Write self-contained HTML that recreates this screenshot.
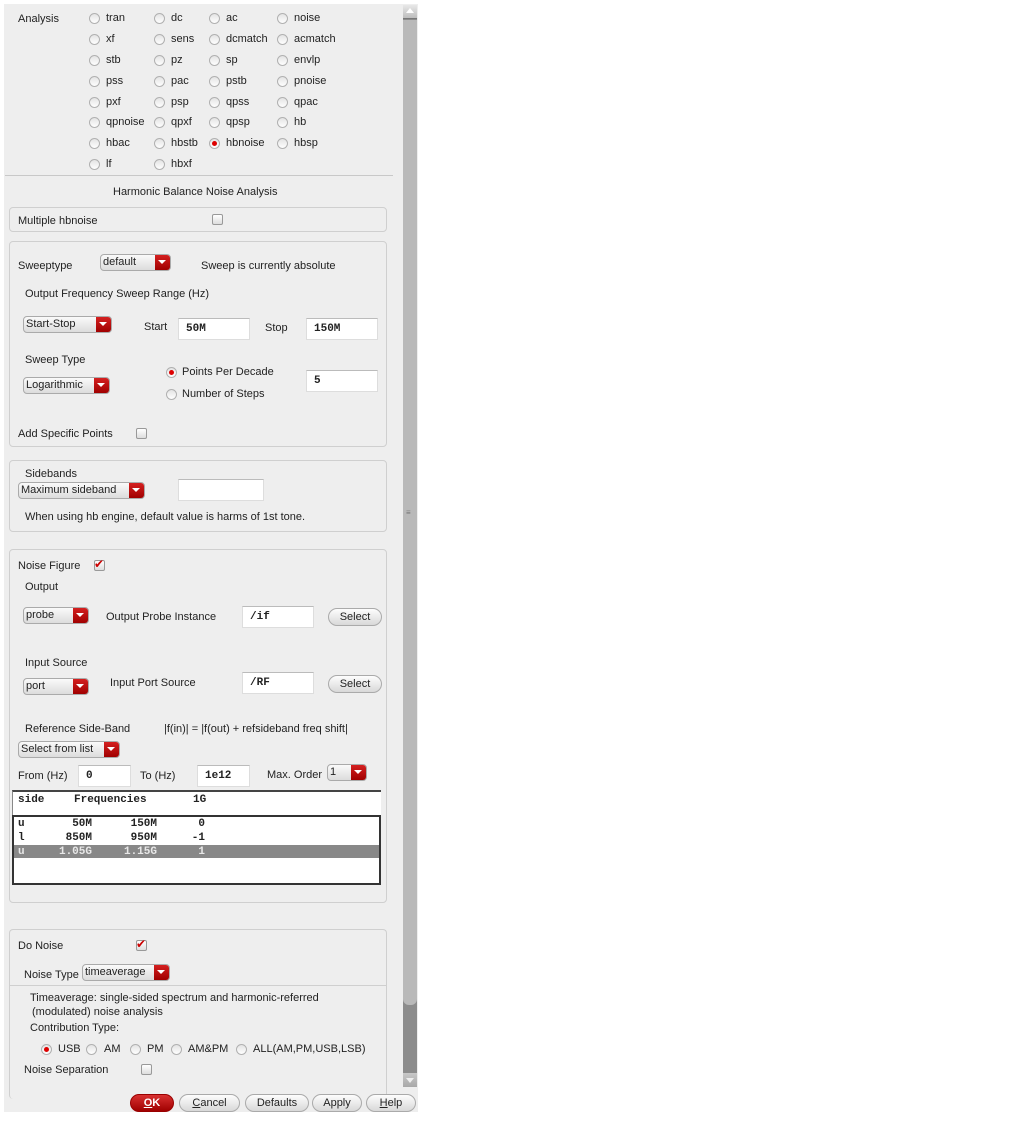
<!DOCTYPE html>
<html><head><meta charset="utf-8"><style>
*{box-sizing:border-box;margin:0;padding:0}
body{width:1013px;height:1122px;background:#fff;position:relative;overflow:hidden;font-family:"Liberation Sans","DejaVu Sans",sans-serif;font-size:11px;color:#222}
.bg{position:absolute;left:4px;top:4px;width:414px;height:1108px;background:#eeeeee}
.t{position:absolute;white-space:nowrap;line-height:12px}
.m{font-family:"Liberation Mono",monospace;font-weight:bold;font-size:11px}
.r{position:absolute;width:11px;height:11px;border-radius:50%;border:1px solid #b0b0b0;background:linear-gradient(#e4e4e4,#fff)}
.r.on::after{content:"";position:absolute;left:2px;top:2px;width:5px;height:5px;border-radius:50%;background:#d00}
.cb{position:absolute;width:11px;height:11px;border:1px solid #999;border-radius:2px;background:linear-gradient(#fff,#ddd)}
.ck{position:absolute;color:#c00;font-size:12px;font-weight:bold;line-height:11px}
.p{position:absolute;border:1px solid #cfcfcf;border-radius:4px;left:9px;width:378px}
.dd{position:absolute;height:17px;border:1px solid #aaa;border-radius:4px;background:linear-gradient(#fafafa,#dcdcdc);font-size:11px;line-height:14px;padding-left:2px;overflow:hidden}
.dd::after{content:"";position:absolute;right:0;top:0;width:15px;height:15px;background:linear-gradient(#d42020,#a00000)}
.dd::before{content:"";position:absolute;right:4px;top:5px;border-left:4px solid transparent;border-right:4px solid transparent;border-top:4px solid #fff;z-index:2}
.in{position:absolute;height:22px;background:#fff;border:1px solid #ddd;border-top-color:#bbb;font-family:"Liberation Mono",monospace;font-weight:bold;line-height:20px;padding-left:7px}
.b{position:absolute;height:18px;border:1px solid #aaa;border-radius:9px;background:linear-gradient(#fdfdfd,#d8d8d8);text-align:center;line-height:16px}
</style></head><body>
<div class="bg"></div>
<div style="position:absolute;left:403px;top:5px;width:14px;height:1082px;background:#8c8c8c"></div>
<div style="position:absolute;left:403px;top:5px;width:14px;height:14px;background:linear-gradient(#e8e8e8,#bdbdbd);border-bottom:1px solid #777"></div>
<div style="position:absolute;left:406px;top:8px;border-left:4px solid transparent;border-right:4px solid transparent;border-bottom:5px solid #fff"></div>
<div style="position:absolute;left:403px;top:20px;width:14px;height:985px;background:#b9b9b9;border-radius:0 0 6px 6px"></div>
<div style="position:absolute;left:403px;top:1073px;width:14px;height:14px;background:linear-gradient(#c8c8c8,#a8a8a8)"></div>
<div style="position:absolute;left:406px;top:1078px;border-left:4px solid transparent;border-right:4px solid transparent;border-top:5px solid #eee"></div>
<div class="t" style="left:406px;top:507px;color:#777;font-size:8px">≡</div>

<div class="t" style="left:18px;top:13px">Analysis</div>
<div class="r" style="left:89px;top:13px"></div><div class="t" style="left:106px;top:12px">tran</div>
<div class="r" style="left:154px;top:13px"></div><div class="t" style="left:171px;top:12px">dc</div>
<div class="r" style="left:209px;top:13px"></div><div class="t" style="left:226px;top:12px">ac</div>
<div class="r" style="left:277px;top:13px"></div><div class="t" style="left:294px;top:12px">noise</div>

<div class="r" style="left:89px;top:34px"></div><div class="t" style="left:106px;top:33px">xf</div>
<div class="r" style="left:154px;top:34px"></div><div class="t" style="left:171px;top:33px">sens</div>
<div class="r" style="left:209px;top:34px"></div><div class="t" style="left:226px;top:33px">dcmatch</div>
<div class="r" style="left:277px;top:34px"></div><div class="t" style="left:294px;top:33px">acmatch</div>

<div class="r" style="left:89px;top:55px"></div><div class="t" style="left:106px;top:54px">stb</div>
<div class="r" style="left:154px;top:55px"></div><div class="t" style="left:171px;top:54px">pz</div>
<div class="r" style="left:209px;top:55px"></div><div class="t" style="left:226px;top:54px">sp</div>
<div class="r" style="left:277px;top:55px"></div><div class="t" style="left:294px;top:54px">envlp</div>

<div class="r" style="left:89px;top:76px"></div><div class="t" style="left:106px;top:75px">pss</div>
<div class="r" style="left:154px;top:76px"></div><div class="t" style="left:171px;top:75px">pac</div>
<div class="r" style="left:209px;top:76px"></div><div class="t" style="left:226px;top:75px">pstb</div>
<div class="r" style="left:277px;top:76px"></div><div class="t" style="left:294px;top:75px">pnoise</div>

<div class="r" style="left:89px;top:97px"></div><div class="t" style="left:106px;top:96px">pxf</div>
<div class="r" style="left:154px;top:97px"></div><div class="t" style="left:171px;top:96px">psp</div>
<div class="r" style="left:209px;top:97px"></div><div class="t" style="left:226px;top:96px">qpss</div>
<div class="r" style="left:277px;top:97px"></div><div class="t" style="left:294px;top:96px">qpac</div>

<div class="r" style="left:89px;top:117px"></div><div class="t" style="left:106px;top:116px">qpnoise</div>
<div class="r" style="left:154px;top:117px"></div><div class="t" style="left:171px;top:116px">qpxf</div>
<div class="r" style="left:209px;top:117px"></div><div class="t" style="left:226px;top:116px">qpsp</div>
<div class="r" style="left:277px;top:117px"></div><div class="t" style="left:294px;top:116px">hb</div>

<div class="r" style="left:89px;top:138px"></div><div class="t" style="left:106px;top:137px">hbac</div>
<div class="r" style="left:154px;top:138px"></div><div class="t" style="left:171px;top:137px">hbstb</div>
<div class="r on" style="left:209px;top:138px"></div><div class="t" style="left:226px;top:137px">hbnoise</div>
<div class="r" style="left:277px;top:138px"></div><div class="t" style="left:294px;top:137px">hbsp</div>

<div class="r" style="left:89px;top:159px"></div><div class="t" style="left:106px;top:158px">lf</div>
<div class="r" style="left:154px;top:159px"></div><div class="t" style="left:171px;top:158px">hbxf</div>

<div style="position:absolute;left:5px;top:175px;width:388px;height:1px;background:#c8c8c8"></div>
<div class="t" style="left:113px;top:186px">Harmonic Balance Noise Analysis</div>

<div class="p" style="top:207px;height:25px"></div>
<div class="t" style="left:18px;top:215px">Multiple hbnoise</div>
<div class="cb" style="left:212px;top:214px"></div>

<div class="p" style="top:241px;height:206px"></div>
<div class="t" style="left:18px;top:260px">Sweeptype</div>
<div class="dd" style="left:100px;top:254px;width:71px">default</div>
<div class="t" style="left:201px;top:260px">Sweep is currently absolute</div>
<div class="t" style="left:25px;top:288px">Output Frequency Sweep Range (Hz)</div>
<div class="dd" style="left:23px;top:316px;width:89px">Start-Stop</div>
<div class="t" style="left:144px;top:321px">Start</div>
<div class="in" style="left:178px;top:318px;width:72px">50M</div>
<div class="t" style="left:265px;top:322px">Stop</div>
<div class="in" style="left:306px;top:318px;width:72px">150M</div>
<div class="t" style="left:25px;top:354px">Sweep Type</div>
<div class="dd" style="left:23px;top:377px;width:87px">Logarithmic</div>
<div class="r on" style="left:166px;top:367px"></div><div class="t" style="left:182px;top:366px">Points Per Decade</div>
<div class="r" style="left:166px;top:389px"></div><div class="t" style="left:182px;top:388px">Number of Steps</div>
<div class="in" style="left:306px;top:370px;width:72px">5</div>
<div class="t" style="left:18px;top:428px">Add Specific Points</div>
<div class="cb" style="left:136px;top:428px"></div>

<div class="p" style="top:460px;height:72px"></div>
<div class="t" style="left:25px;top:468px">Sidebands</div>
<div class="dd" style="left:18px;top:482px;width:127px">Maximum sideband</div>
<div class="in" style="left:178px;top:479px;width:86px"></div>
<div class="t" style="left:25px;top:511px">When using hb engine, default value is harms of 1st tone.</div>

<div class="p" style="top:549px;height:354px"></div>
<div class="t" style="left:18px;top:560px">Noise Figure</div>
<div class="cb" style="left:94px;top:560px"></div><div class="ck" style="left:94px;top:559px">✔</div>
<div class="t" style="left:25px;top:581px">Output</div>
<div class="dd" style="left:23px;top:607px;width:66px">probe</div>
<div class="t" style="left:106px;top:611px">Output Probe Instance</div>
<div class="in" style="left:242px;top:606px;width:72px">/if</div>
<div class="b" style="left:328px;top:608px;width:54px">Select</div>
<div class="t" style="left:25px;top:657px">Input Source</div>
<div class="dd" style="left:23px;top:678px;width:66px">port</div>
<div class="t" style="left:110px;top:677px">Input Port Source</div>
<div class="in" style="left:242px;top:672px;width:72px">/RF</div>
<div class="b" style="left:328px;top:675px;width:54px">Select</div>
<div class="t" style="left:25px;top:723px">Reference Side-Band</div>
<div class="t" style="left:164px;top:723px">|f(in)| = |f(out) + refsideband freq shift|</div>
<div class="dd" style="left:18px;top:741px;width:102px">Select from list</div>
<div class="t" style="left:18px;top:770px">From (Hz)</div>
<div class="in" style="left:78px;top:765px;width:53px">0</div>
<div class="t" style="left:140px;top:770px">To (Hz)</div>
<div class="in" style="left:197px;top:765px;width:53px">1e12</div>
<div class="t" style="left:267px;top:769px">Max. Order</div>
<div class="dd" style="left:327px;top:764px;width:40px">1</div>
<div style="position:absolute;left:12px;top:790px;width:369px;height:26px;background:#fff;border-top:2px solid #444;border-left:1px solid #888"></div>
<div class="t m" style="left:18px;top:794px">side</div>
<div class="t m" style="left:74px;top:794px">Frequencies</div>
<div class="t m" style="left:193px;top:794px">1G</div>
<div style="position:absolute;left:12px;top:815px;width:369px;height:70px;background:#fff;border:2px solid #333"></div>
<div style="position:absolute;left:14px;top:845px;width:365px;height:13px;background:#888"></div>
<div class="t m" style="left:18px;top:818px">u</div><div class="t m" style="left:60px;top:818px;width:32px;text-align:right">50M</div><div class="t m" style="left:120px;top:818px;width:37px;text-align:right">150M</div><div class="t m" style="left:190px;top:818px;width:15px;text-align:right">0</div>
<div class="t m" style="left:18px;top:832px">l</div><div class="t m" style="left:60px;top:832px;width:32px;text-align:right">850M</div><div class="t m" style="left:120px;top:832px;width:37px;text-align:right">950M</div><div class="t m" style="left:190px;top:832px;width:15px;text-align:right">-1</div>
<div class="t m" style="left:18px;top:846px;color:#e8e8e8">u</div><div class="t m" style="left:50px;top:846px;width:42px;text-align:right;color:#e8e8e8">1.05G</div><div class="t m" style="left:110px;top:846px;width:47px;text-align:right;color:#e8e8e8">1.15G</div><div class="t m" style="left:190px;top:846px;width:15px;text-align:right;color:#e8e8e8">1</div>

<div class="p" style="top:929px;height:170px;border-bottom:none"></div>
<div style="position:absolute;left:9px;top:985px;width:378px;height:1px;background:#cfcfcf"></div>
<div class="t" style="left:18px;top:940px">Do Noise</div>
<div class="cb" style="left:136px;top:940px"></div><div class="ck" style="left:136px;top:939px">✔</div>
<div class="t" style="left:24px;top:969px">Noise Type</div>
<div class="dd" style="left:82px;top:964px;width:88px">timeaverage</div>
<div class="t" style="left:30px;top:992px">Timeaverage: single-sided spectrum and harmonic-referred</div>
<div class="t" style="left:32px;top:1006px">(modulated) noise analysis</div>
<div class="t" style="left:30px;top:1022px">Contribution Type:</div>
<div class="r on" style="left:41px;top:1044px"></div><div class="t" style="left:58px;top:1043px">USB</div>
<div class="r" style="left:86px;top:1044px"></div><div class="t" style="left:104px;top:1043px">AM</div>
<div class="r" style="left:130px;top:1044px"></div><div class="t" style="left:147px;top:1043px">PM</div>
<div class="r" style="left:171px;top:1044px"></div><div class="t" style="left:188px;top:1043px">AM&amp;PM</div>
<div class="r" style="left:236px;top:1044px"></div><div class="t" style="left:253px;top:1043px">ALL(AM,PM,USB,LSB)</div>
<div class="t" style="left:24px;top:1064px">Noise Separation</div>
<div class="cb" style="left:141px;top:1064px"></div>

<div class="b" style="left:130px;top:1094px;width:44px;background:linear-gradient(#d83030,#a00000);border-color:#900;color:#fff;font-weight:bold"><u>O</u>K</div>
<div class="b" style="left:179px;top:1094px;width:61px"><u>C</u>ancel</div>
<div class="b" style="left:245px;top:1094px;width:64px">Defaults</div>
<div class="b" style="left:312px;top:1094px;width:50px">Apply</div>
<div class="b" style="left:366px;top:1094px;width:50px"><u>H</u>elp</div>
</body></html>
